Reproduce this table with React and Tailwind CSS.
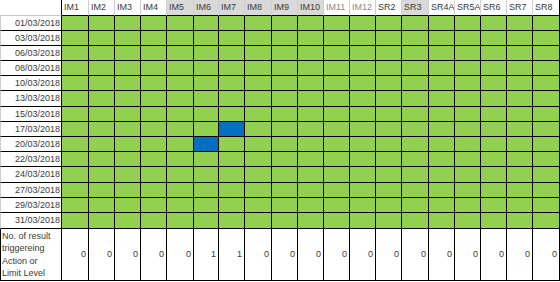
import React from 'react';

// column headers and which ones have the grey fill
const columns = [
    { name: 'IM1', grey: false },
    { name: 'IM2', grey: false },
    { name: 'IM3', grey: false },
    { name: 'IM4', grey: false },
    { name: 'IM5', grey: true },
    { name: 'IM6', grey: true },
    { name: 'IM7', grey: true },
    { name: 'IM8', grey: true },
    { name: 'IM9', grey: true },
    { name: 'IM10', grey: true },
    { name: 'IM11', grey: false, light: true },
    { name: 'IM12', grey: false, light: true },
    { name: 'SR2', grey: false },
    { name: 'SR3', grey: true },
    { name: 'SR4A', grey: false },
    { name: 'SR5A', grey: false },
    { name: 'SR6', grey: false },
    { name: 'SR7', grey: false },
    { name: 'SR8', grey: false },
];

const dates = [
    '01/03/2018', '03/03/2018', '06/03/2018', '08/03/2018', '10/03/2018',
    '13/03/2018', '15/03/2018', '17/03/2018', '20/03/2018', '22/03/2018',
    '24/03/2018', '27/03/2018', '29/03/2018', '31/03/2018',
];

// cells flagged blue: [rowIndex, colIndex]
const flagged = { '7-6': true, '8-5': true };

const totals = [0, 0, 0, 0, 0, 1, 1, 0, 0, 0, 0, 0, 0, 0, 0, 0, 0, 0, 0];

const App = () => {
    return (
        <div className="w-[560px] h-[282px] bg-white overflow-hidden" style={{ fontFamily: '"Liberation Sans", Arial, sans-serif' }}>
            <div className="grid grid-cols-[62px_27px_26px_26px_26px_27px_25px_26px_27px_26px_26px_26px_26px_26px_27px_26px_26px_26px_26px_27px] grid-rows-[16px_15px_15px_15px_15px_15px_16px_15px_15px_15px_15px_16px_15px_15px_16px_52px] text-[9px] leading-none text-[#333]">
                {/* Header row */}
                <div className="border-b border-r border-b-[#c8c8c8] border-r-black bg-white"></div>
                {columns.map((col, i) => (
                    <div
                        key={col.name}
                        className={
                            (col.grey ? 'bg-[#d9d9d9] ' : 'bg-white ') +
                            (col.light ? 'text-[#8a8a8a] ' : 'text-[#3a3a3a] ') +
                            (i === columns.length - 1 ? 'border-r-black ' : 'border-r-[#cfcfcf] ') +
                            'border-b border-r border-b-black flex items-center pl-[2px] whitespace-nowrap overflow-hidden'
                        }
                    >
                        {col.name}
                    </div>
                ))}

                {/* Date rows */}
                {dates.map((date, r) => (
                    <React.Fragment key={date}>
                        <div className="bg-white border-l border-l-[#cfcfcf] border-b border-r border-b-black border-r-black flex items-center justify-end pr-[1px] text-[#3a3a3a]">
                            {date}
                        </div>
                        {columns.map((col, c) => (
                            <div
                                key={col.name}
                                className={
                                    (flagged[r + '-' + c] ? 'bg-[#0070c0] ' : 'bg-[#92d050] ') +
                                    'border-b border-r border-black'
                                }
                            ></div>
                        ))}
                    </React.Fragment>
                ))}

                {/* Totals row */}
                <div className="bg-white border-l border-b border-r border-black pl-[1px] flex items-center leading-[12.3px] text-[#3a3a3a]">
                    <span>No. of result<br />triggereing<br />Action or<br />Limit Level</span>
                </div>
                {totals.map((val, c) => (
                    <div key={c} className="bg-white border-b border-r border-black flex items-center justify-end pr-[2px] text-[#3a3a3a]">
                        {val}
                    </div>
                ))}
            </div>
        </div>
    );
};

export default App;
